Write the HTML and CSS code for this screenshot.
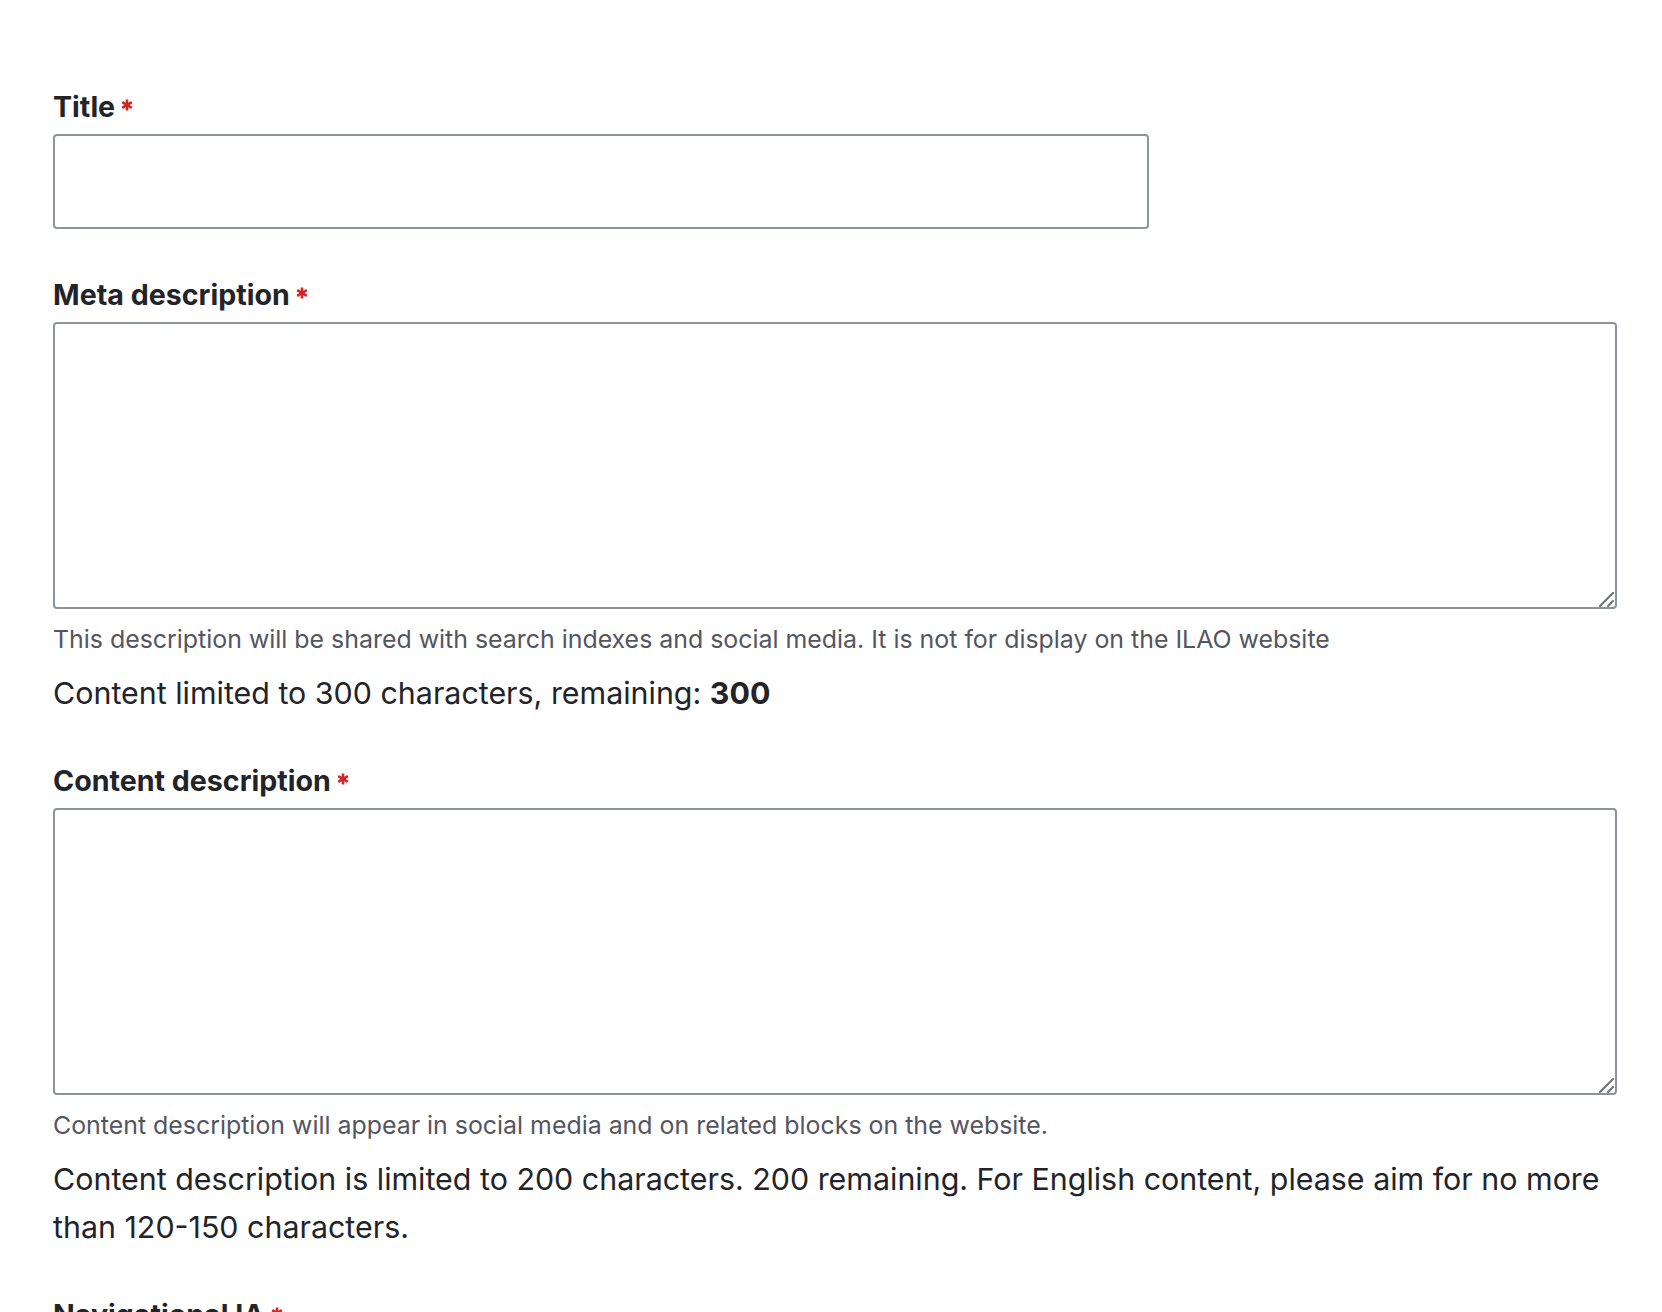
FILE: index.html
```html
<!DOCTYPE html>
<html lang="en">
<head>
<meta charset="utf-8">
<title>Edit content</title>
<link rel="stylesheet" href="styles.css">
</head>
<body>
<form class="form">
  <div class="form-item">
    <label class="label" for="title">Title<svg class="req" viewBox="0 0 12 12" aria-hidden="true"><g stroke="#d72222" stroke-width="2.6"><line x1="6" y1="0.5" x2="6" y2="11.5"/><line x1="1.2" y1="3.2" x2="10.8" y2="8.8"/><line x1="1.2" y1="8.8" x2="10.8" y2="3.2"/></g></svg></label>
    <input class="text-input" id="title" type="text">
  </div>
  <div class="form-item">
    <label class="label" for="meta">Meta description<svg class="req" viewBox="0 0 12 12" aria-hidden="true"><g stroke="#d72222" stroke-width="2.6"><line x1="6" y1="0.5" x2="6" y2="11.5"/><line x1="1.2" y1="3.2" x2="10.8" y2="8.8"/><line x1="1.2" y1="8.8" x2="10.8" y2="3.2"/></g></svg></label>
    <div class="textarea-wrap">
      <textarea class="textarea" id="meta"></textarea>
      <svg class="grip" viewBox="0 0 16 16" aria-hidden="true"><g stroke="#6e6f75" stroke-width="2" stroke-linecap="round"><line x1="2" y1="15" x2="15" y2="2"/><line x1="10" y1="15" x2="15" y2="10"/></g></svg>
    </div>
    <div class="description">This description will be shared with search indexes and social media. It is not for display on the ILAO website</div>
    <div class="counter">Content limited to 300 characters, remaining: <strong>300</strong></div>
  </div>
  <div class="form-item">
    <label class="label" for="content">Content description<svg class="req" viewBox="0 0 12 12" aria-hidden="true"><g stroke="#d72222" stroke-width="2.6"><line x1="6" y1="0.5" x2="6" y2="11.5"/><line x1="1.2" y1="3.2" x2="10.8" y2="8.8"/><line x1="1.2" y1="8.8" x2="10.8" y2="3.2"/></g></svg></label>
    <div class="textarea-wrap">
      <textarea class="textarea" id="content"></textarea>
      <svg class="grip" viewBox="0 0 16 16" aria-hidden="true"><g stroke="#6e6f75" stroke-width="2" stroke-linecap="round"><line x1="2" y1="15" x2="15" y2="2"/><line x1="10" y1="15" x2="15" y2="10"/></g></svg>
    </div>
    <div class="description">Content description will appear in social media and on related blocks on the website.</div>
    <div class="counter">Content description is limited to 200 characters. 200 remaining. For English content, please aim for no more than 120-150 characters.</div>
  </div>
  <div class="form-item">
    <label class="label">Navigational IA<svg class="req" viewBox="0 0 12 12" aria-hidden="true"><g stroke="#d72222" stroke-width="2.6"><line x1="6" y1="0.5" x2="6" y2="11.5"/><line x1="1.2" y1="3.2" x2="10.8" y2="8.8"/><line x1="1.2" y1="8.8" x2="10.8" y2="3.2"/></g></svg></label>
  </div>
</form>
</body>
</html>
```
FILE: styles.css
```css
html, body {
  margin: 0;
  padding: 0;
  background: #ffffff;
}
body {
  font-family: Inter, "Noto Sans", sans-serif;
  color: #232429;
}
.form {
  width: 1564px;
  padding: 89px 45px 0 53px;
  display: flex;
  flex-direction: column;
  gap: 48px;
}
.form-item {
  display: flex;
  flex-direction: column;
  align-items: flex-start;
}
.form-item + .form-item + .form-item {
  margin-top: -2px;
}
.label {
  font-size: 28.6px;
  line-height: 36px;
  font-weight: 700;
  color: #232429;
  margin-bottom: 9px;
  white-space: nowrap;
}
.req {
  display: inline-block;
  width: 12px;
  height: 12px;
  margin-left: 6px;
  vertical-align: top;
  margin-top: 10px;
}
.text-input {
  box-sizing: border-box;
  width: 1096px;
  height: 95px;
  margin: 0;
  border: 2px solid #8e929c;
  border-radius: 4px;
  background: #fff;
  font: inherit;
  padding: 0 16px;
}
.textarea-wrap {
  position: relative;
  width: 1564px;
  height: 287px;
}
.textarea {
  box-sizing: border-box;
  width: 100%;
  height: 100%;
  margin: 0;
  border: 2px solid #8e929c;
  border-radius: 4px;
  background: #fff;
  font: inherit;
  resize: none;
  display: block;
}
.grip {
  position: absolute;
  right: 3px;
  bottom: 2px;
  width: 16px;
  height: 16px;
}
.description {
  margin-top: 12px;
  font-size: 24.9px;
  line-height: 36px;
  color: #545560;
}
.counter {
  margin-top: 12px;
  font-size: 30.4px;
  line-height: 48px;
  color: #232429;
}
.counter strong {
  font-weight: 700;
}
```
